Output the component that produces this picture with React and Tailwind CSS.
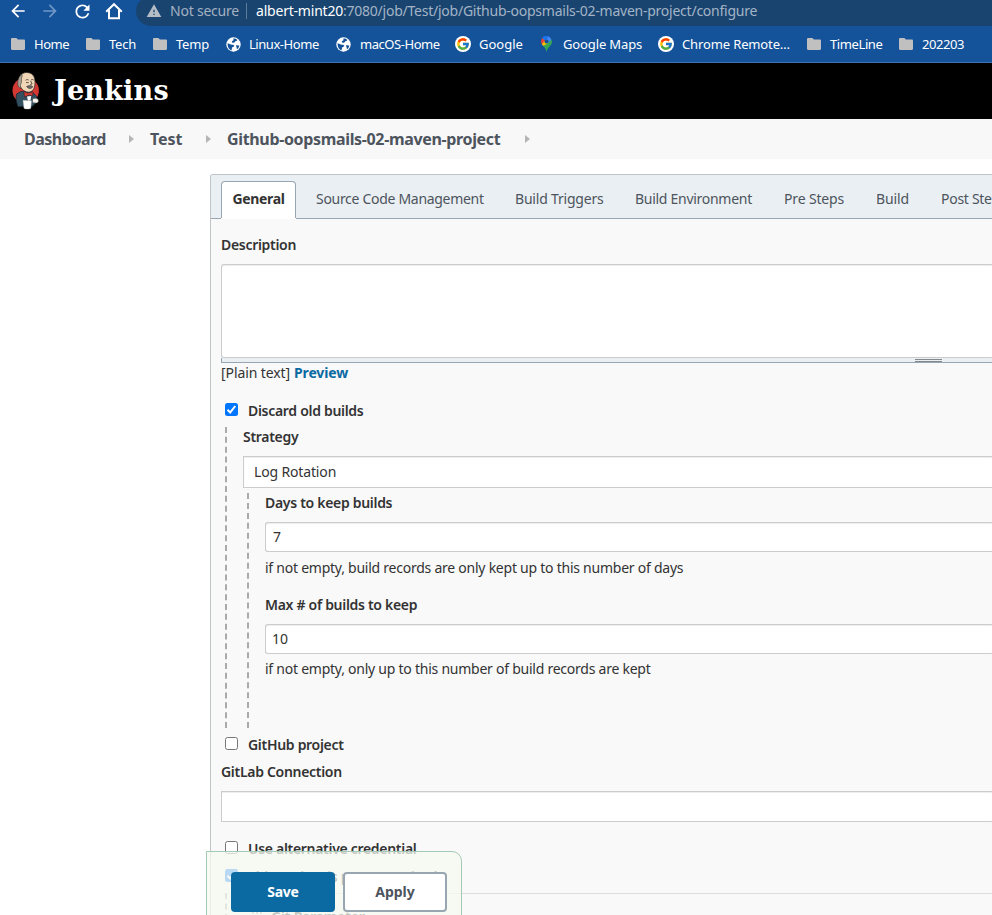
import clsx from "clsx";
import { FcGoogle } from "react-icons/fc";
import { MdArrowBack, MdArrowForward, MdRefresh, MdWarning } from "react-icons/md";

function FolderIcon() {
  return (
    <svg width="14" height="12" viewBox="0 0 14 12" fill="#c0c0c0">
      <path d="M1.2 0h4.2l1.5 1.6h5.9C13.5 1.6 14 2.100 14 2.800v8c0 .7-.5 1.200-1.200 1.200H1.200C.5 12 0 11.500 0 10.800V1.200C0 .5.5 0 1.200 0z" />
    </svg>
  );
}

function GlobeIcon() {
  return (
    <svg width="15" height="15" viewBox="0 0 15 15">
      <circle cx="7.500" cy="7.500" r="7.200" fill="#fff" />
      <path d="M1.600 6.200 5 7.600c1.200.3 2.600 0 3.200 1 .4.900-.6 1.300-1.400 1.500-.9.300-.6 1.200-1 1.900l-.3 1.400C3 12.500 1.400 10.200 1.600 6.200z" fill="#145299" />
      <path d="M7.300 1.600c1.500-.1 3 .3 4 1.300-.3 1-1.100 1-1.900 1.300-.9.400-.5 1.500-1.600 1.600-1.100.1-2-.2-2-1 .1-1.100 1.600-.7 1.700-1.700.1-.6-.3-.9-.2-1.500z" fill="#145299" />
      <path d="M10.300 8.300c1-.4 2 .1 3 .1-.2 1.500-.9 2.800-2 3.700-.9-.3-.5-1.400-.8-2.200-.2-.5-.8-1.200-.2-1.600z" fill="#145299" />
    </svg>
  );
}

function GoogleIcon() {
  return (
    <span className="flex size-4 items-center justify-center rounded-full bg-white">
      <FcGoogle size={14} />
    </span>
  );
}

function MapsIcon() {
  return (
    <svg width="11" height="16" viewBox="0 0 11 16">
      <path d="M5.500 16C5 13 3.700 11.600 2.300 9.900L8.800 2l1.600 1.400C11.400 5.400 11 7.600 9.600 9.300 7.400 11.900 6.100 13 5.500 16z" fill="#34a853" />
      <path d="M.7 8C1.100 8.800 1.600 9.300 2.300 9.900L7.200 7 4 3.500z" fill="#fbbc04" />
      <path d="M1.300 1.900C-.2 3.700-.3 6.200.7 8L4.500 4.300z" fill="#ea4335" />
      <path d="M1.300 1.900 4.200 4.500 7.400 7 10.400 3.400C9.300 1.200 7.500 0 5.500 0 3.700 0 2.300.7 1.300 1.900z" fill="#4285f4" />
      <path d="M1.300 1.900 4.200 4.500 7.600.4C5.200-.4 2.700.2 1.300 1.900z" fill="#1a73e8" />
      <circle cx="5.500" cy="5.400" r="2" fill="#145299" />
    </svg>
  );
}

function HomeIcon() {
  return (
    <svg width="18" height="18" viewBox="0 0 18 18" fill="none" stroke="#fff" strokeWidth="2">
      <path d="M1.200 9.800 9 2.200l7.800 7.600M4 8v8.300h10V8" />
    </svg>
  );
}

function JenkinsMascot() {
  return (
    <svg width="28" height="38" viewBox="0 0 28 38">
      <circle cx="13.700" cy="18.500" r="13.200" fill="#d33833" />
      <path d="M6 34.500C4.500 30 3.500 26 4.500 22L9 19.500l11 .5 4.500 4 .8 6-5.300 4.500z" fill="#335061" stroke="#1a2a33" strokeWidth=".8" />
      <path d="M7 12C5.500 6 8.500.6 14.500.5c6 0 8.500 4 8.500 9.500 0 5-1 8.500-5 10-4.500 1-9-2.500-11-8z" fill="#f0d6b7" stroke="#231f20" strokeWidth=".7" />
      <path d="M6.500 15C4.800 11 5.800 5 10 2.200c.8 2-.9 3.500-.5 5.800.3 2-.2 3-.9 4.500-.4 1.300.5 2.700 0 4z" fill="#a9a193" stroke="#231f20" strokeWidth=".5" />
      <path d="M13.500 8.300c1-.9 2.200-.9 3.200-.2M19 8c.8-.7 2-.6 2.700 0M14 10.500l2.700.1M18.600 8.800l1.500 3.200-1.900.5" fill="none" stroke="#231f20" strokeWidth=".7" />
      <path d="M14.600 14.500c2-1.200 4.500-1.200 6.300.2-1.500 2.400-4.800 2.400-6.300-.2z" fill="#6d6b6d" stroke="#231f20" strokeWidth=".5" />
      <path d="M11.800 19.500l3.700 1.600 1.600-.2 3.700-1.200.1 4.300-3.300-.8-1.700.3-3.300 1.600z" fill="#d33833" stroke="#231f20" strokeWidth=".5" />
      <path d="M15 24.500l4.200-.5-.8 4.500-2.400.2z" fill="#fff" />
      <path d="M11 28.300l8.500.5-.7 7.600c-2 .9-4.700.9-6.800 0z" fill="#fff" stroke="#a8a8a8" strokeWidth=".4" />
      <path d="M20.500 27c2-1 4.700-1 5.700.8.700 1.600 0 2.900-1.500 3.200l-4-.2z" fill="#f7f3ee" stroke="#444" strokeWidth=".5" />
    </svg>
  );
}

const bookmarks = [
  { label: "Home", icon: <FolderIcon />, box: "w-[75px]", gap: "gap-[9px]", track: "tracking-[-0.5px]" },
  { label: "Tech", icon: <FolderIcon />, box: "w-[67px]", gap: "gap-[9px]", track: "tracking-[-0.2px]" },
  { label: "Temp", icon: <FolderIcon />, box: "w-[73px]", gap: "gap-[9px]", track: "tracking-[-0.2px]" },
  { label: "Linux-Home", icon: <GlobeIcon />, box: "w-[110px]", gap: "gap-[8px]", track: "tracking-[-0.45px]" },
  { label: "macOS-Home", icon: <GlobeIcon />, box: "w-[119px]", gap: "gap-[9px]", track: "tracking-[-0.45px]" },
  { label: "Google", icon: <GoogleIcon />, box: "w-[86px]", gap: "gap-[8px]", track: "tracking-[0px]" },
  { label: "Google Maps", icon: <MapsIcon />, box: "w-[117px]", gap: "gap-[11px]", track: "tracking-[-0.13px]" },
  { label: "Chrome Remote…", icon: <GoogleIcon />, box: "w-[149px]", gap: "gap-[8px]", track: "tracking-[-0.13px]" },
  { label: "TimeLine", icon: <FolderIcon />, box: "w-[92px]", gap: "gap-[9px]", track: "tracking-[-0.4px]" },
  { label: "202203", icon: <FolderIcon />, box: "w-[80px]", gap: "gap-[9px]", track: "tracking-[-0.45px]" },
];

const tabs = [
  { label: "Source Code Management", box: "w-[199px]", track: "tracking-[-0.3px]" },
  { label: "Build Triggers", box: "w-[120px]", track: "tracking-[-0.2px]" },
  { label: "Build Environment", box: "w-[149px]", track: "tracking-[-0.28px]" },
  { label: "Pre Steps", box: "w-[92px]", track: "tracking-[-0.15px]" },
  { label: "Build", box: "w-[65px]", track: "tracking-[-0.1px]" },
  { label: "Post Steps", box: "w-[80px]", track: "tracking-[-0.28px]" },
];

function BrowserChrome() {
  return (
    <header className="h-[63px] shrink-0 overflow-hidden border-b border-[#4472b4] bg-[#145299] text-white">
      <div className="-mt-1 flex h-[30px] items-center">
        <div className="flex w-[136px] items-center gap-[12px] pl-[8px]">
          <MdArrowBack size={20} />
          <MdArrowForward size={20} className="text-[#6f97c6]" />
          <MdRefresh size={21} />
          <HomeIcon />
        </div>
        <div className="flex h-full flex-1 items-center rounded-l-full bg-[#194470] pl-[10px] text-sm whitespace-nowrap">
          <MdWarning size={16} color="#b4bcc6" />
          <span className="ml-[8px] w-[69px] tracking-[-0.22px] text-[#a3b1c1]">Not secure</span>
          <span className="mr-[9px] ml-[7px] h-4 w-px bg-[#5d7c9c]" />
          <span className="tracking-[-0.21px]">albert-mint20</span>
          <span className="tracking-[-0.24px] text-[#a3b4c6]">:7080/job/Test/job/Github-oopsmails-02-maven-project/configure</span>
        </div>
      </div>
      <nav className="flex h-9 items-center pl-[11px] text-[13px] whitespace-nowrap">
        {bookmarks.map((b) => (
          <span key={b.label} className={clsx("flex shrink-0 items-center", b.box, b.gap, b.track)}>
            {b.icon}
            <span className="pt-[2px]">{b.label}</span>
          </span>
        ))}
      </nav>
    </header>
  );
}

function Crumb({ label, box, track }) {
  return (
    <span className={clsx("flex shrink-0 items-center justify-between", box)}>
      <span className={track}>{label}</span>
      <svg width="5" height="8" viewBox="0 0 5 8" fill="#b5b5b5">
        <path d="M0 0l5 4-5 4z" />
      </svg>
    </span>
  );
}

function Label({ children, className }) {
  return (
    <div className={clsx("flex h-5 items-center font-semibold tracking-[-0.3px]", className)}>{children}</div>
  );
}

function Hint({ children, className }) {
  return <div className={clsx("flex h-5 items-center tracking-[-0.245px]", className)}>{children}</div>;
}

function Field({ value, className }) {
  return (
    <div className={clsx("flex items-center border border-r-0 border-[#ccc] bg-white shadow-[inset_0_1px_1px_rgba(0,0,0,0.075)]", className)}>
      {value}
    </div>
  );
}

function CheckRow({ label, checked, className, track = "tracking-[-0.3px]" }) {
  return (
    <div className={clsx("flex h-[26px] items-center pl-1", className)}>
      <span
        className={clsx(
          "-mt-[3px] mr-[10px] flex size-[13px] items-center justify-center rounded-[2.5px]",
          checked ? "bg-[#0075ff]" : "border border-[#767676] bg-white",
        )}
      >
        {checked && (
          <svg width="11" height="11" viewBox="0 0 11 11" fill="none" stroke="#fff" strokeWidth="2">
            <path d="M1.500 5.800 4.200 8.400 9.300 2" />
          </svg>
        )}
      </span>
      <span className={clsx("font-semibold", track)}>{label}</span>
    </div>
  );
}

function ConfigPanel() {
  return (
    <main className="mt-[15px] ml-[210px] h-[741px] overflow-hidden rounded-tl-[3px] border-t border-l border-[#bfc4c7] bg-[#f9f9f9] text-sm whitespace-nowrap text-[#333]">
      <div className="flex h-[44px] items-end border-b border-[#98a6b1] bg-[#e9eff2] pl-[10px] text-[#4d545d]">
        <div className="flex h-[37px] w-[75px] shrink-0 items-center justify-center rounded-t-[4px] border border-b-0 border-[#98a6b1] bg-white pb-[2px] font-bold tracking-[-0.36px] text-[#333] shadow-[0_1px_0_#fff]">
          General
        </div>
        <div className="flex h-[37px] items-center pb-px pl-[20px]">
          {tabs.map((t) => (
            <span key={t.label} className={clsx("shrink-0", t.box, t.track)}>
              {t.label}
            </span>
          ))}
        </div>
      </div>

      <div className="pl-[10px]">
        <Label className="mt-[16px]">Description</Label>
        <Field className="mt-[9px] h-[94px] rounded-l-[3px]" />
        <div className="flex h-[5px] items-start border-b border-l border-[#98a6b1] bg-[#e9eff2] pl-[693px]">
          <span className="mt-px h-[3px] w-[27px] border-y border-[#85898c]" />
        </div>
        <div className="flex h-5 items-center gap-1">
          <span className="w-[69px] tracking-[-0.1px]">[Plain text]</span>
          <span className="font-bold tracking-[-0.14px] text-[#0b6aa2]">Preview</span>
        </div>

        <CheckRow label="Discard old builds" checked className="mt-[15px]" />
        <div className="mt-[3px] ml-1 h-[301px] border-l-2 border-dashed border-[#aaa] pl-4">
          <Label>Strategy</Label>
          <Field value="Log Rotation" className="mt-[9px] h-8 pl-[10px] tracking-[-0.15px]" />
          <div className="mt-[5px] ml-1 h-[235px] border-l-2 border-dashed border-[#aaa] pl-4">
            <Label>Days to keep builds</Label>
            <Field value="7" className="mt-[9px] h-[30px] rounded-l-[3px] pl-[7px]" />
            <Hint className="mt-[6px]">if not empty, build records are only kept up to this number of days</Hint>
            <Label className="mt-[17px]">Max # of builds to keep</Label>
            <Field value="10" className="mt-[9px] h-[30px] rounded-l-[3px] pl-[6px]" />
            <Hint className="mt-[5px]">if not empty, only up to this number of build records are kept</Hint>
          </div>
        </div>

        <CheckRow label="GitHub project" className="mt-1" />
        <Label className="mt-1">GitLab Connection</Label>
        <Field className="mt-[9px] h-[31px]" />
        <CheckRow label="Use alternative credential" className="mt-[14px]" />
        <CheckRow label="This project is parameterised" checked className="mt-[2px]" />
        <div className="mt-[3px] ml-1 h-[100px] border-l-2 border-dashed border-[#aaa] pl-4">
          <div className="flex gap-[9px] border-t border-[#ddd] pt-[13px] pl-[9px]">
            <svg width="10" height="14" viewBox="0 0 10 14" fill="#aaa">
              <path d="M0 5h2v2H0zM4 5h2v2H4zM8 5h2v2H8zM0 9h2v2H0zM4 9h2v2H4zM8 9h2v2H8z" />
            </svg>
            <span className="leading-5 font-bold tracking-[-0.35px]">Git Parameter</span>
          </div>
        </div>
      </div>
    </main>
  );
}

export default function App() {
  return (
    <div className="relative flex h-[915px] w-full flex-col overflow-hidden bg-white font-['Noto_Sans',sans-serif]">
      <BrowserChrome />
      <div className="flex h-14 shrink-0 items-center gap-[14px] bg-black pl-[12px]">
        <JenkinsMascot />
        <span className="-mt-[2px] font-['DejaVu_Serif',serif] text-[27px] leading-none font-bold tracking-[0.2px] text-white">
          Jenkins
        </span>
      </div>
      <div className="flex h-10 shrink-0 items-center bg-[#f8f8f8] pl-6 text-base font-bold whitespace-nowrap text-[#4d545d]">
        <Crumb label="Dashboard" box="w-[110px] mr-[16px]" track="tracking-[-0.49px]" />
        <Crumb label="Test" box="w-[61px] mr-[16px]" track="tracking-[-0.1px]" />
        <Crumb label="Github-oopsmails-02-maven-project" box="w-[303px]" track="tracking-[-0.345px]" />
      </div>
      <ConfigPanel />

      <div className="absolute top-[851px] left-[206px] flex h-[80px] w-[256px] gap-2 rounded-tr-[10px] border border-[#a5c9b7] bg-[rgba(245,249,240,0.75)] pt-5 pl-6 text-sm font-bold">
        <button className="h-10 w-[104px] rounded-[4px] bg-[#0b6aa2] tracking-[-0.3px] text-white">Save</button>
        <button className="h-10 w-[104px] rounded-[4px] border-2 border-[#98a6b1] bg-white text-[#4d545d]">Apply</button>
      </div>
    </div>
  );
}
